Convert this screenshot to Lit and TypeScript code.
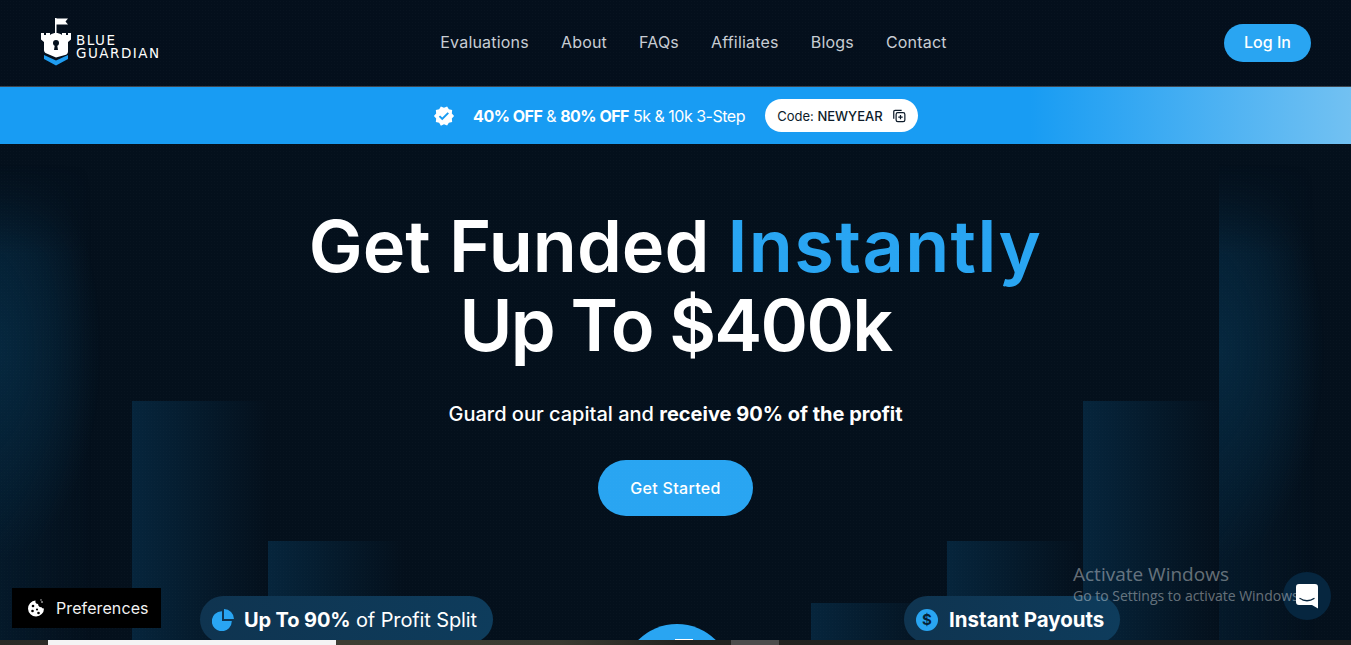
import { LitElement, html, css } from "lit";
import { customElement } from "lit/decorators.js";

const bars = [
  { h: 496, glow: true },
  { h: 239 },
  { h: 99 },
  { h: 0 },
  { h: 0 },
  { h: 0 },
  { h: 37 },
  { h: 99 },
  { h: 239 },
  { h: 496, glow: true },
];

@customElement("app-root")
export class AppRoot extends LitElement {
  static styles = css`
    :host {
      display: block;
      width: 1351px;
      height: 645px;
      overflow: hidden;
      position: relative;
      background: #04101c;
      font-family: "Inter", "Liberation Sans", sans-serif;
      color: #fff;
    }
    * { box-sizing: border-box; }
    header {
      height: 87px;
      display: grid;
      grid-template-columns: 1fr auto 1fr;
      align-items: center;
      padding: 0 40px;
      background: #040f1c;
      background-image: radial-gradient(rgba(255,255,255,.016) .6px, transparent .8px);
      background-size: 3px 3px;
      border-bottom: 1px solid #3d4650;
    }
    .logo { display: flex; align-items: flex-start; gap: 4px; height: 50px; margin-top: -2px; }
    .logo svg { width: 32px; height: 50px; flex: none; }
    .logo-text {
      font-family: "DejaVu Sans", sans-serif;
      font-weight: 400;
      font-size: 13.5px;
      line-height: 12.5px;
      letter-spacing: 1.5px;
      margin-top: 17px;
      text-transform: uppercase;
    }
    nav { display: flex; gap: 32px; font-size: 16px; color: #c8cdd4; letter-spacing: 0.2px; padding: 0 0 2px 36px; }
    .login-wrap { display: flex; justify-content: flex-end; }
    .login {
      width: 87px; height: 38px; border-radius: 19px; background: #29a5f2;
      display: flex; align-items: center; justify-content: center;
      font-size: 16px; font-weight: 500; padding-bottom: 2px;
    }
    .banner {
      height: 57px;
      background: linear-gradient(90deg, #189cf3 0, #189cf3 1030px, #72c1f2 1351px);
      display: flex; align-items: center; justify-content: center;
      font-size: 16px;
    }
    .banner svg.badge { width: 22px; height: 22px; margin-right: 18px; fill: #fff; }
    .banner b { font-weight: 700; }
    .banner .msg { letter-spacing: -0.5px; }
    .code {
      margin-left: 20px; height: 33px; width: 153px; border-radius: 17px; background: #fff;
      color: #0d1b2a; font-size: 13px; display: flex; align-items: center; justify-content: center; gap: 9px;
    }
    .code span { font-weight: 500; }
    .code svg { width: 14px; height: 14px; }
    .hero {
      position: relative; height: 496px; overflow: hidden; text-align: center; padding-top: 62px;
    }
    .hero::after {
      content: ""; position: absolute; inset: 0; pointer-events: none;
      background-image: radial-gradient(rgba(255,255,255,.014) .6px, transparent .8px);
      background-size: 3px 3px;
    }
    .bars {
      position: absolute; inset: 0 -4px 0 -4px;
      display: grid; grid-template-columns: repeat(10, 1fr); align-items: end;
    }
    .bar { background: linear-gradient(90deg, #06253c 0, rgba(6,37,60,.55) 45%, rgba(6,37,60,0) 100%); }
    .bar.glow {
      background:
        radial-gradient(ellipse 105px 210px at 0 206px, #06283f 0, rgba(6,40,63,.5) 55%, rgba(6,40,63,0) 100%),
        linear-gradient(90deg, rgba(6,37,60,.45) 0, rgba(6,37,60,0) 70%);
      -webkit-mask-image: linear-gradient(180deg, transparent 20px, #000 110px);
      mask-image: linear-gradient(180deg, transparent 20px, #000 110px);
    }
    h1, .sub, .cta { position: relative; }
    h1 { margin: 0; font-size: 72px; line-height: 79px; font-weight: 600; letter-spacing: 0; }
    h1 em { font-style: normal; color: #29a5f2; letter-spacing: 1.4px; }
    h1 .l2 { letter-spacing: -1.7px; }
    .sub { margin-top: 36px; font-size: 20px; line-height: 28px; font-weight: 500; }
    .sub b { font-weight: 700; }
    .cta {
      margin: 32px auto 0; width: 155px; height: 56px; border-radius: 28px; background: #29a5f2;
      display: flex; align-items: center; justify-content: center; font-size: 16px; font-weight: 500;
      letter-spacing: .3px; padding-bottom: 1px;
    }
    .pill {
      position: absolute; top: 452px; height: 47px; border-radius: 24px;
      background: linear-gradient(90deg, #0f3450, #0e3c5c);
      display: flex; align-items: center; white-space: nowrap; z-index: 1;
    }
    .pill b { font-weight: 700; }
    .pill.a { left: 200px; width: 293px; padding-left: 12px; gap: 10px; font-size: 20px; letter-spacing: -0.12px; }
    .pill.b { left: 904px; width: 216px; padding-left: 12px; gap: 11px; font-size: 20.5px; font-weight: 700; }
    .pill svg { width: 22px; height: 22px; flex: none; }
    .dollar {
      width: 22px; height: 22px; border-radius: 50%; background: #29a5f2; color: #062238;
      display: flex; align-items: center; justify-content: center; font-size: 15px; font-weight: 700;
    }
    .play {
      position: absolute; left: 622px; top: 480px; width: 110px; height: 110px; border-radius: 50%;
      background: #29a5f2; z-index: 1;
    }
    .play i { position: absolute; left: 53px; top: 15px; width: 18px; height: 3px; background: #fff; }
    .strip {
      position: absolute; left: 0; right: 0; bottom: 0; height: 5px; display: flex; z-index: 2;
      background: linear-gradient(90deg, #2a2a26 0, #3d3d33 340px, #3b3b32 560px, #232320 680px, #202020 100%);
    }
    .strip i:nth-child(1) { margin-left: 48px; width: 288px; background: #f4f4f4; }
    .strip i:nth-child(2) { margin-left: 395px; width: 48px; background: #4d4d4d; }
    .prefs {
      position: absolute; left: 12px; top: 588px; width: 149px; height: 40px; background: #000; z-index: 2;
      display: flex; align-items: center; gap: 11px; padding-left: 15px; font-size: 16px; letter-spacing: .1px; color: #f3f3f3;
    }
    .prefs svg { width: 18px; height: 18px; }
    .activate {
      position: absolute; left: 1073px; top: 562px; color: rgba(255,255,255,.4);
      font-family: "Open Sans", sans-serif; white-space: nowrap; pointer-events: none; z-index: 3;
    }
    .activate div:first-child { font-size: 19px; line-height: 24px; }
    .activate div:last-child { font-size: 14px; line-height: 20px; }
    .chat {
      position: absolute; left: 1283px; top: 572px; width: 48px; height: 48px; border-radius: 50%;
      background: #06263f; display: flex; align-items: center; justify-content: center; z-index: 2;
    }
    .chat svg { width: 22px; height: 25px; }
  `;

  render() {
    return html`
      <header>
        <div class="logo">
          <svg viewBox="0 0 32 50" aria-hidden="true">
            <path fill="#fff" d="M15 1h1.5v15H15zM16.5 1.5H28l-2.5 3 2.5 3H16.5z"/>
            <path fill="#fff" d="M1 16h3v2h2v-2h4v2c2-1.5 4-2 6-2s4 .5 6 2v-2h4v2h2v-2h3v6.5l-3 2.5v9.5c0 1.5-.8 2.6-2 3.3L16 40.5 6 36.3c-1.2-.7-2-1.8-2-3.3V25l-3-2.5z"/>
            <circle cx="16" cy="26" r="3" fill="#040f1c"/>
            <path fill="#040f1c" d="M15 27h2l1 6h-4z"/>
            <path fill="#1f9cf0" d="M4 38l12 5.5L28 38v4l-12 6.5L4 42z"/>
          </svg>
          <div class="logo-text">Blue<br />Guardian</div>
        </div>
        <nav>
          <span>Evaluations</span><span>About</span><span>FAQs</span><span>Affiliates</span><span>Blogs</span><span>Contact</span>
        </nav>
        <div class="login-wrap"><div class="login">Log In</div></div>
      </header>
      <div class="banner">
        <svg class="badge" viewBox="0 0 24 24" aria-hidden="true"><path d="M23 12l-2.44-2.79.34-3.69-3.61-.82-1.89-3.2L12 2.96 8.6 1.5 6.71 4.69 3.1 5.5l.34 3.7L1 12l2.44 2.79-.34 3.7 3.61.82L8.6 22.5l3.4-1.47 3.4 1.46 1.89-3.19 3.61-.82-.34-3.69L23 12zm-12.91 4.72l-3.8-3.81 1.48-1.48 2.32 2.33 5.85-5.87 1.48 1.48-7.33 7.35z"/></svg>
        <span class="msg"><b>40% OFF</b> &amp; <b>80% OFF</b> 5k &amp; 10k 3-Step</span>
        <div class="code">
          <div>Code: <span>NEWYEAR</span></div>
          <svg viewBox="0 0 16 16" fill="none" stroke="#0d1b2a" stroke-width="1.4" aria-hidden="true">
            <path d="M2 11V3a1.5 1.5 0 0 1 1.5-1.5H11"/>
            <rect x="4.7" y="4.2" width="10" height="10.3" rx="2"/>
            <path d="M9.7 6.8v5M7.2 9.3h5"/>
          </svg>
        </div>
      </div>
      <section class="hero">
        <div class="bars">
          ${bars.map((b) => html`<div class="bar ${b.glow ? "glow" : ""}" style="height:${b.h}px"></div>`)}
        </div>
        <h1>Get Funded <em>Instantly</em><br /><span class="l2">Up To $400k</span></h1>
        <div class="sub">Guard our capital and <b>receive 90% of the profit</b></div>
        <div class="cta">Get Started</div>
        <div class="pill a">
          <svg viewBox="0 0 22 22" fill="#29a5f2" aria-hidden="true">
            <path d="M10 2.2V12h9.8A10 10 0 1 1 10 2.2z"/>
            <path d="M12 0a10 10 0 0 1 10 10H12z"/>
          </svg>
          <span><b>Up To 90%</b> of Profit Split</span>
        </div>
        <div class="pill b"><span class="dollar">$</span><span>Instant Payouts</span></div>
        <div class="play"><i></i></div>
      </section>
      <div class="strip"><i></i><i></i></div>
      <div class="prefs">
        <svg viewBox="0 0 18 18" aria-hidden="true">
          <path fill="#fff" d="M8.5 1.5a3 3 0 0 0 2.6 3.6 3 3 0 0 0 3.4 3.2 2.6 2.6 0 0 0 2.5 1.2A8 8 0 1 1 8.5 1.5z"/>
          <circle cx="6" cy="7" r="1.3" fill="#000"/><circle cx="5.5" cy="12" r="1.3" fill="#000"/>
          <circle cx="10" cy="10.5" r="1.1" fill="#000"/><circle cx="11.5" cy="14" r="1.3" fill="#000"/>
          <circle cx="15" cy="3" r=".8" fill="#fff"/><circle cx="14" cy=".9" r=".6" fill="#fff"/>
        </svg>
        <span>Preferences</span>
      </div>
      <div class="chat">
        <svg viewBox="0 0 22 25" aria-hidden="true">
          <path fill="#fff" d="M3 0h16a3 3 0 0 1 3 3v21.5L16 21H3a3 3 0 0 1-3-3V3a3 3 0 0 1 3-3z"/>
          <path fill="none" stroke="#06263f" stroke-width="1.3" stroke-linecap="round" d="M4 14.5c4 3 10 3 14 0"/>
        </svg>
      </div>
      <div class="activate"><div>Activate Windows</div><div>Go to Settings to activate Windows.</div></div>
    `;
  }
}
